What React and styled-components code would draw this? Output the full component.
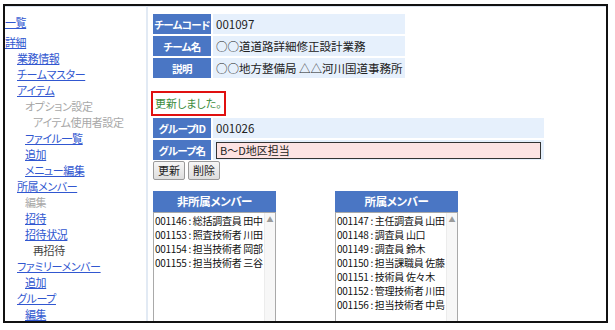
import React from "react";
import styled, { createGlobalStyle } from "styled-components";

const Global = createGlobalStyle`
  html, body { margin: 0; padding: 0; background: #fff; }
  body { font-family: "Noto Sans CJK JP", "Liberation Sans", sans-serif; color: #222; }
`;

const Frame = styled.div`
  position: relative;
  margin: 4px 0 0 3px;
  width: 601px;
  height: 315px;
  border: 2px solid #111;
  overflow: hidden;
  display: flex;
  background: #fff;
`;

const Sidebar = styled.nav`
  width: 141px;
  flex: none;
  padding: 7px 0 0 0;
  border-top: 1px solid #dbe4ef;
  display: flex;
  flex-direction: column;
  font-size: 11px;
  line-height: 16px;
  letter-spacing: -0.4px;
  font-feature-settings: "palt";
`;

const NavItem = styled.a`
  display: block;
  padding-left: ${(p) => p.$level * 8}px;
  margin-top: ${(p) => (p.$gap ? "4px" : "0")};
  white-space: nowrap;
  color: ${(p) => (p.$muted ? "#a8a8a8" : p.$plain ? "#444" : "#3157d0")};
  text-decoration: ${(p) => (p.$muted || p.$plain ? "none" : "underline")};
  text-underline-offset: 1px;
`;

const Main = styled.main`
  flex: 1;
  border-left: 2px solid #e2eaf4;
  border-top: 1px solid #dbe4ef;
  padding: 5px 0 0 3px;
  display: flex;
  flex-direction: column;
  align-items: flex-start;
`;

const InfoTable = styled.table`
  border-collapse: separate;
  border-spacing: 2px;
  width: ${(p) => p.$width}px;
  font-size: 11.5px;
  table-layout: fixed;
`;

const HeadCell = styled.th`
  width: 58px;
  height: 20px;
  padding: 0;
  background: #4a76c4;
  color: #fff;
  font-weight: 700;
  font-size: 10.5px;
  letter-spacing: -0.6px;
  text-align: center;
  white-space: nowrap;
  font-feature-settings: "palt";
`;

const ValueCell = styled.td`
  background: #e6f0fc;
  padding: 0 3px;
  white-space: nowrap;
  color: #222;
`;

const Message = styled.div`
  margin: 11px 0 0 0;
  border: 2px solid #e01010;
  padding: 3px 2px 3px 2px;
  font-size: 11px;
  line-height: 15px;
  color: #3d8c3d;
  white-space: nowrap;
  font-feature-settings: "palt";
`;

const NameInput = styled.input`
  box-sizing: border-box;
  width: 100%;
  height: 17px;
  border: 1px solid #333;
  background: #fde3e3;
  padding: 0 3px;
  font-family: inherit;
  font-size: 11px;
  color: #222;
  outline: none;
`;

const ButtonRow = styled.div`
  display: flex;
  gap: 3px;
  margin: -1px 0 0 2px;
`;

const Button = styled.button`
  height: 19px;
  padding: 0 4px;
  font-family: inherit;
  font-size: 11px;
  color: #222;
  border: 1px solid #9a9a9a;
  border-radius: 2px;
  background: linear-gradient(#f6f6f6, #dedede);
  line-height: 17px;
`;

const Members = styled.div`
  display: flex;
  gap: 59px;
  margin: 11px 0 0 2px;
`;

const MemberCol = styled.section`
  width: 123px;
  display: flex;
  flex-direction: column;
`;

const MemberHead = styled.div`
  height: 21px;
  background: #4a76c4;
  color: #fff;
  font-weight: 700;
  font-size: 11.5px;
  letter-spacing: -0.4px;
  line-height: 21px;
  text-align: center;
  font-feature-settings: "palt";
`;

const ListBox = styled.div`
  display: flex;
  height: 130px;
  border: 1px solid #a9a9a9;
  background: #fff;
`;

const ListItems = styled.ul`
  flex: 1;
  min-width: 0;
  list-style: none;
  margin: 0;
  padding: 1px 0 0 1px;
  font-size: 10px;
  letter-spacing: -0.3px;
  line-height: 14px;
  color: #111;
  white-space: nowrap;
  overflow: hidden;
`;

const ScrollTrack = styled.div`
  width: 10px;
  flex: none;
  background: #f7f7f7;
  border-left: 1px solid #ececec;
  color: #9a9a9a;
  font-size: 7px;
  line-height: 12px;
  text-align: center;
`;

const nav = [
  { t: "一覧", l: 0 },
  { t: "詳細", l: 0, gap: true },
  { t: "業務情報", l: 1.5 },
  { t: "チームマスター", l: 1.5 },
  { t: "アイテム", l: 1.5 },
  { t: "オプション設定", l: 2.5, muted: true },
  { t: "アイテム使用者設定", l: 3.5, muted: true },
  { t: "ファイル一覧", l: 2.5 },
  { t: "追加", l: 2.5 },
  { t: "メニュー編集", l: 2.5 },
  { t: "所属メンバー", l: 1.5 },
  { t: "編集", l: 2.5, muted: true },
  { t: "招待", l: 2.5 },
  { t: "招待状況", l: 2.5 },
  { t: "再招待", l: 3.5, plain: true },
  { t: "ファミリーメンバー", l: 1.5 },
  { t: "追加", l: 2.5 },
  { t: "グループ", l: 1.5 },
  { t: "編集", l: 2.5 },
];

const nonMembers = [
  "001146 : 総括調査員 田中",
  "001153 : 照査技術者 川田",
  "001154 : 担当技術者 岡部",
  "001155 : 担当技術者 三谷",
];

const members = [
  "001147 : 主任調査員 山田",
  "001148 : 調査員 山口",
  "001149 : 調査員 鈴木",
  "001150 : 担当課職員 佐藤",
  "001151 : 技術員 佐々木",
  "001152 : 管理技術者 川田",
  "001156 : 担当技術者 中島",
];

function MemberList({ title, items }) {
  return (
    <MemberCol>
      <MemberHead>{title}</MemberHead>
      <ListBox>
        <ListItems>
          {items.map((i) => (
            <li key={i}>{i}</li>
          ))}
        </ListItems>
        <ScrollTrack>▲</ScrollTrack>
      </ListBox>
    </MemberCol>
  );
}

export default function App() {
  return (
    <>
      <Global />
      <Frame>
        <Sidebar>
          {nav.map((n, i) => (
            <NavItem
              key={i}
              href={n.muted || n.plain ? undefined : "#"}
              $level={n.l}
              $gap={n.gap}
              $muted={n.muted}
              $plain={n.plain}
            >
              {n.t}
            </NavItem>
          ))}
        </Sidebar>
        <Main>
          <InfoTable $width={256}>
            <tbody>
              <tr>
                <HeadCell>チームコード</HeadCell>
                <ValueCell>001097</ValueCell>
              </tr>
              <tr>
                <HeadCell>チーム名</HeadCell>
                <ValueCell>○○道道路詳細修正設計業務</ValueCell>
              </tr>
              <tr>
                <HeadCell>説明</HeadCell>
                <ValueCell>○○地方整備局 △△河川国道事務所</ValueCell>
              </tr>
            </tbody>
          </InfoTable>
          <Message>更新しました。</Message>
          <InfoTable $width={395}>
            <tbody>
              <tr>
                <HeadCell>グループID</HeadCell>
                <ValueCell>001026</ValueCell>
              </tr>
              <tr>
                <HeadCell>グループ名</HeadCell>
                <ValueCell>
                  <NameInput defaultValue="B～D地区担当" />
                </ValueCell>
              </tr>
            </tbody>
          </InfoTable>
          <ButtonRow>
            <Button>更新</Button>
            <Button>削除</Button>
          </ButtonRow>
          <Members>
            <MemberList title="非所属メンバー" items={nonMembers} />
            <MemberList title="所属メンバー" items={members} />
          </Members>
        </Main>
      </Frame>
    </>
  );
}
